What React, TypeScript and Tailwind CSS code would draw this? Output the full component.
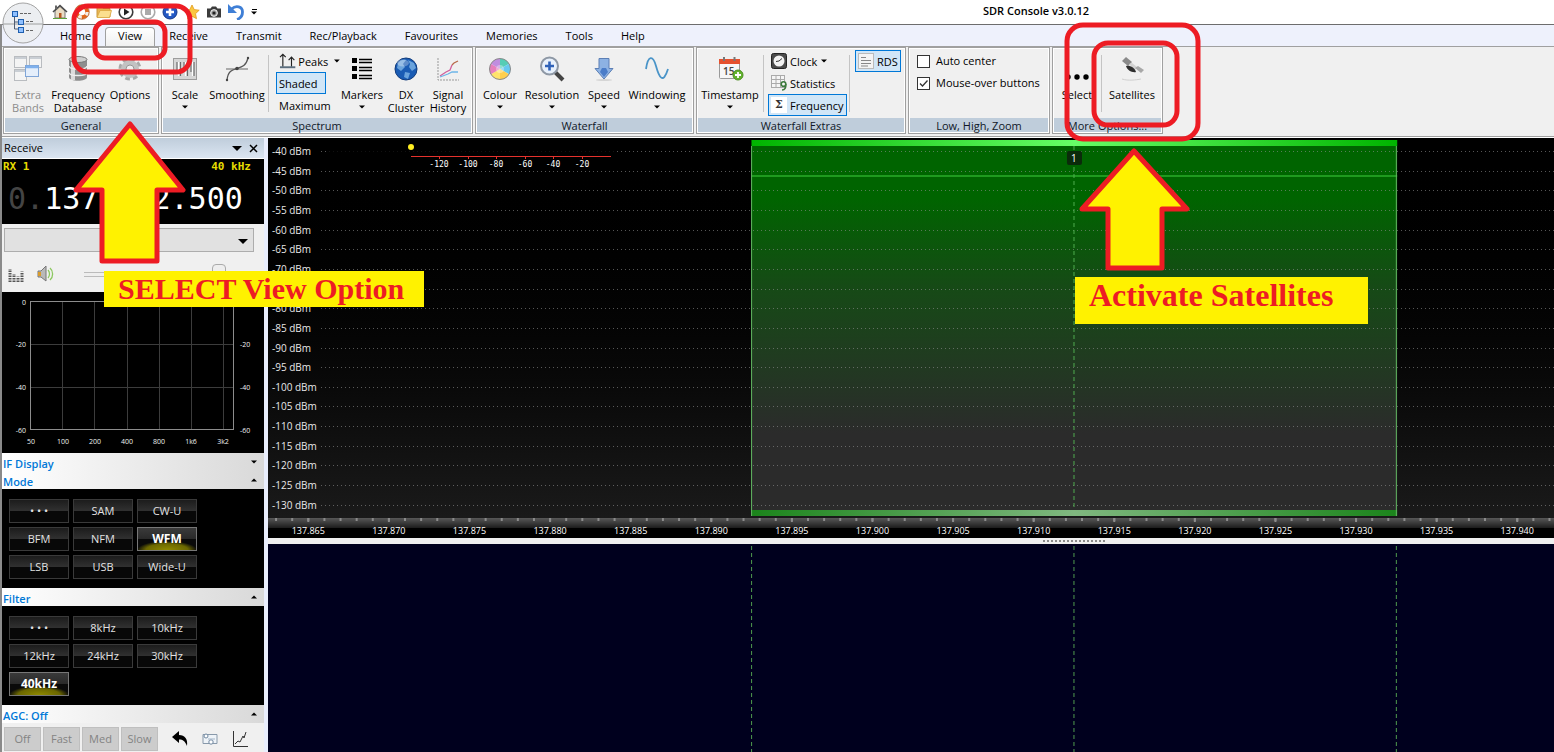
import type { ReactNode } from "react"

const SPAN_START = 137.8625
const SPAN = 0.07978

const freqToX = (freq: number) => `${((freq - SPAN_START) / SPAN) * 100}%`
const dbmToY = (dbm: number) => Math.round(13 + ((-40 - dbm) / 5) * 19.65)

const dbmLevels = Array.from({ length: 19 }, (_, i) => -40 - i * 5)
const freqLabels = Array.from({ length: 16 }, (_, i) => 137.865 + i * 0.005)
const freqTicks = Array.from({ length: 80 }, (_, i) => 137.863 + i * 0.001)
const tabs = ["Home", "View", "Receive", "Transmit", "Rec/Playback", "Favourites", "Memories", "Tools", "Help"]
const modes = ["• • •", "SAM", "CW-U", "BFM", "NFM", "WFM", "LSB", "USB", "Wide-U"]
const filters = ["• • •", "8kHz", "10kHz", "12kHz", "24kHz", "30kHz", "40kHz"]

/* ---------- Small shared pieces ---------- */

function Caret({ up = false, className = "" }: { up?: boolean; className?: string }) {
  return (
    <svg className={className} width="6" height="4" viewBox="0 0 6 4" aria-hidden="true">
      <path d={up ? "M0 3.5L3 .5L6 3.5Z" : "M0 .5H6L3 3.5Z"} fill="#000" />
    </svg>
  )
}

function Icon({ size = 28, box = 28, children }: { size?: number; box?: number; children: ReactNode }) {
  return (
    <svg width={size} height={size} viewBox={`0 0 ${box} ${box}`} fill="none" aria-hidden="true">
      {children}
    </svg>
  )
}

function BigButton({
  icon,
  label,
  second,
  caret,
  disabled,
  className,
}: {
  icon: ReactNode
  label: string
  second?: string
  caret?: boolean
  disabled?: boolean
  className: string
}) {
  return (
    <button
      type="button"
      disabled={disabled}
      className={`flex shrink-0 flex-col items-center pt-1 text-[11px] leading-[13px] whitespace-nowrap ${disabled ? "text-[#8c8c8c]" : "text-black"} ${className}`}
    >
      <span className="mb-[3px] flex h-8 items-center justify-center">{icon}</span>
      <span>{label}</span>
      {second && <span>{second}</span>}
      {caret && <Caret className="mt-1" />}
    </button>
  )
}

function Group({ title, className, children }: { title: string; className: string; children: ReactNode }) {
  return (
    <section className={`flex h-[87px] shrink-0 flex-col border border-[#a0a0a0] bg-white p-px ${className}`}>
      <div className="flex flex-1 bg-[#f0f0f0]">{children}</div>
      <h2 className="h-[14px] bg-[#bfcddb] text-center text-[11px] leading-4 text-[#101828]">{title}</h2>
    </section>
  )
}

function Separator() {
  return <div className="mx-px mt-[6px] h-[57px] w-px shrink-0 bg-[#c4c4c4]" />
}

/* ---------- Title bar ---------- */

function QuickAccess() {
  const item = "flex size-4 items-center justify-center"
  return (
    <div className="flex items-center gap-[6px] pl-[52px]">
      <button type="button" aria-label="Home" className={item}>
        <Icon size={16} box={16}>
          <path d="M3 7V14H13V7L8 2.500Z" fill="#e9dcc4" stroke="#777" />
          <path d="M1 8L8 1.500L15 8" stroke="#4a4a4a" strokeWidth="1.600" />
          <path d="M4 1.500V5" stroke="#666" strokeWidth="2" />
          <path d="M7 14V9H9.500V14Z" fill="#b5561f" />
          <path d="M1 14.500H15" stroke="#5da13b" />
        </Icon>
      </button>
      <button type="button" aria-label="Help" className={item}>
        <Icon size={16} box={16}>
          <circle cx="8" cy="8" r="5.200" stroke="#e0671b" strokeWidth="4" />
          <circle cx="8" cy="8" r="5.200" stroke="#f4eee6" strokeWidth="3.400" strokeDasharray="3.500 4.670" />
          <circle cx="8" cy="8" r="7.300" stroke="#9c4a16" strokeWidth=".6" />
        </Icon>
      </button>
      <button type="button" aria-label="Open" className={item}>
        <Icon size={16} box={16}>
          <path d="M1 13V3H6L7 4.500H14V13Z" fill="#e8b755" stroke="#c9973a" />
          <path d="M1 13.500L4 6.500H15.500L13.500 13.500Z" fill="#fbdf8e" stroke="#d9a640" strokeWidth=".8" />
        </Icon>
      </button>
      <button type="button" aria-label="Start" className={item}>
        <Icon size={16} box={16}>
          <circle cx="8" cy="8" r="6.800" fill="#fff" stroke="#3c3c3c" strokeWidth="1.600" />
          <path d="M6 4.500L11.500 8L6 11.500Z" fill="#222" />
        </Icon>
      </button>
      <button type="button" aria-label="Stop" className={item}>
        <Icon size={16} box={16}>
          <circle cx="8" cy="8" r="6.800" fill="#fff" stroke="#aaa" strokeWidth="1.600" />
          <rect x="5" y="5" width="6" height="6" fill="#aaa" />
        </Icon>
      </button>
      <button type="button" aria-label="Add" className={item}>
        <Icon size={16} box={16}>
          <circle cx="8" cy="8" r="7" fill="#2459c4" stroke="#16398a" />
          <path d="M8 4V12M4 8H12" stroke="#fff" strokeWidth="2.600" />
        </Icon>
      </button>
      <button type="button" aria-label="Favourite" className={item}>
        <Icon size={16} box={16}>
          <path d="M8 1L10.200 5.600L15.200 6.200L11.500 9.700L12.500 14.700L8 12.200L3.500 14.700L4.500 9.700L.8 6.200L5.800 5.600Z" fill="#fbc740" stroke="#e09b1c" strokeWidth=".8" />
        </Icon>
      </button>
      <button type="button" aria-label="Snapshot" className={item}>
        <Icon size={16} box={16}>
          <path d="M1 4.500H4.500L6 2.500H10L11.500 4.500H15V13.500H1Z" fill="#3b3b3b" />
          <circle cx="8" cy="9" r="3.400" fill="#999" stroke="#fff" strokeWidth=".9" />
          <circle cx="8" cy="9" r="1.600" fill="#222" />
        </Icon>
      </button>
      <button type="button" aria-label="Undo" className={item}>
        <Icon size={16} box={16}>
          <path d="M3.500 5C8 1 14.500 2.500 14.500 8C14.500 12 12 14.500 9 15.500" stroke="#3f7fd6" strokeWidth="2.800" />
          <path d="M0 0V9H9Z" fill="#3f7fd6" />
        </Icon>
      </button>
      <button type="button" aria-label="Customise toolbar" className="flex h-4 w-2 flex-col items-center justify-center gap-px">
        <span className="h-px w-[5px] bg-black" />
        <Caret />
      </button>
    </div>
  )
}

function TitleBar() {
  return (
    <header className="flex h-6 bg-white">
      <QuickAccess />
      <h1 className="flex-1 pl-[260px] text-center text-[11px] leading-[22px] font-semibold text-black">SDR Console v3.0.12</h1>
    </header>
  )
}

function AppOrb() {
  return (
    <button type="button" aria-label="Application menu" className="absolute top-[2px] left-[2px] size-[42px] rounded-full">
      <Icon size={42} box={42}>
        <circle cx="21" cy="21" r="20" fill="#eceef1" stroke="#a3a3a3" />
        <path d="M1.500 22H40.500" stroke="#8c8c8c" strokeWidth=".8" />
        <path d="M12.500 14V27H17M12.500 20H17" stroke="#4f5d73" />
        <path d="M18 11.500H29M24 19.500H32M24 28.500H32" stroke="#666" strokeDasharray="3 1" />
        <rect x="10.500" y="9.500" width="5" height="5" fill="#8fc0ff" stroke="#1f5fae" />
        <rect x="16.500" y="17.500" width="5" height="5" fill="#8fc0ff" stroke="#1f5fae" />
        <rect x="16.500" y="25.500" width="5" height="5" fill="#8fc0ff" stroke="#1f5fae" />
      </Icon>
    </button>
  )
}

function TabBar() {
  return (
    <nav className="flex h-[22px] items-end border-t border-[#6d6d6d] bg-[#eef1fc] pl-[44px]">
      {tabs.map((tab) => (
        <button
          key={tab}
          type="button"
          className={`h-[19px] pb-[2px] text-[11px] leading-4 text-black ${tab === "View" ? "rounded-t border border-b-0 border-[#a0a0a0] bg-gradient-to-b from-white to-[#f0f0f0] px-3" : "px-[14px]"}`}
        >
          {tab}
        </button>
      ))}
    </nav>
  )
}

/* ---------- Ribbon ---------- */

const icons = {
  bands: (
    <Icon size={30} box={30}>
      <g fill="#f4f4f4" stroke="#b9bcc0">
        <rect x="1.500" y="2.500" width="12" height="11" />
        <rect x="16.500" y="2.500" width="12" height="11" />
        <rect x="1.500" y="15.500" width="12" height="11" />
      </g>
      <path d="M2 4H13M17 4H28M2 17H13" stroke="#c9ced4" strokeWidth="2" />
      <rect x="12.500" y="11.500" width="13" height="11" fill="#e4eefb" stroke="#7fa5d8" />
      <path d="M13 13H25" stroke="#7fb0ec" strokeWidth="2.500" />
    </Icon>
  ),
  database: (
    <Icon>
      <path d="M5 4V22C5 27 23 27 23 22V4Z" fill="#8e8e8e" />
      <path d="M9 5V25" stroke="#dcdcdc" strokeWidth="4" />
      <ellipse cx="14" cy="4.500" rx="9" ry="3" fill="#cfcfcf" stroke="#777" />
      <path d="M5 11C5 15 23 15 23 11M5 17.500C5 21.500 23 21.500 23 17.500" stroke="#eee" strokeWidth="1.400" />
    </Icon>
  ),
  gear: (
    <Icon>
      <circle cx="14" cy="14" r="9.500" stroke="#a8a8a8" strokeWidth="4" strokeDasharray="4.500 2.960" />
      <circle cx="14" cy="14" r="6.500" stroke="#c2c2c2" strokeWidth="5" />
      <circle cx="14" cy="14" r="4" fill="#f0f0f0" stroke="#969696" />
    </Icon>
  ),
  scale: (
    <Icon>
      <rect x="2.500" y="3.500" width="23" height="21" fill="#d6d6d6" stroke="#9c9c9c" />
      <path d="M6 7V17M9.500 7V21M13 7V17M16.500 7V21M20 7V17M23 7V21" stroke="#6a6a6a" strokeWidth="1.200" />
      <path d="M7.500 7V21M14.500 7V21M21.500 7V21" stroke="#fff" strokeWidth="1.200" />
    </Icon>
  ),
  smoothing: (
    <Icon>
      <path d="M4 25C5 16 9 15 14 13.500S23 11 25 3" stroke="#555" strokeWidth="1.200" />
      <path d="M3 14H25" stroke="#666" />
      <circle cx="14" cy="13.500" r="1.800" fill="#444" />
      <circle cx="4" cy="25" r="1.200" fill="#444" />
      <circle cx="25" cy="3" r="1.200" fill="#444" />
    </Icon>
  ),
  markers: (
    <Icon>
      <path d="M4 3h5v5H4zM4 11h5v5H4zM4 19h5v5H4z" fill="#000" />
      <path d="M11 4.500H24M11 7.500H24M11 12.500H24M11 15.500H24M11 20.500H24M11 23.500H24" stroke="#000" strokeWidth="1.500" />
    </Icon>
  ),
  globe: (
    <Icon>
      <circle cx="14" cy="14" r="11" fill="#1a5cb4" stroke="#123c7c" />
      <path d="M6 8C8 5 12 4 14 5L11 9L13 12L9 16L5 13Z M16 5L22 8L24 13L20 16L17 12L18 9Z M13 17L18 18L16 24L12 22Z" fill="#6aa3dc" />
      <ellipse cx="11" cy="8" rx="6" ry="3.500" fill="#fff" opacity=".3" />
    </Icon>
  ),
  history: (
    <Icon>
      <path d="M4 3V25H25" stroke="#999" strokeDasharray="2 1" />
      <path d="M6 21L12 17L16 15L18 10" stroke="#d0609c" strokeWidth="1.300" />
      <path d="M18 10L20 8L24 6" stroke="#b86a4a" strokeWidth="1.300" />
      <path d="M6 22L14 19L18 17H24" stroke="#6db5e8" strokeWidth="1.300" />
    </Icon>
  ),
  colour: (
    <Icon>
      <path d="M14 14L14 3.500A10.500 10.500 0 0 1 23.100 8.800Z" fill="#55cdb5" />
      <path d="M14 14L23.100 8.800A10.500 10.500 0 0 1 23.100 19.200Z" fill="#67c8ef" />
      <path d="M14 14L23.100 19.200A10.500 10.500 0 0 1 14 24.500Z" fill="#ffcf4d" />
      <path d="M14 14L14 24.500A10.500 10.500 0 0 1 4.900 19.200Z" fill="#ffe36b" />
      <path d="M14 14L4.900 19.200A10.500 10.500 0 0 1 4.900 8.800Z" fill="#e77fbd" />
      <path d="M14 14L4.900 8.800A10.500 10.500 0 0 1 14 3.500Z" fill="#c08de0" />
      <circle cx="14" cy="14" r="10.500" stroke="#8a8a8a" />
      <circle cx="14" cy="14" r="4" fill="#fff" opacity=".35" />
    </Icon>
  ),
  resolution: (
    <Icon>
      <path d="M17 17L25 25" stroke="#444" strokeWidth="4" />
      <circle cx="11.500" cy="11" r="8.500" fill="#e8f1fc" stroke="#8e98a5" strokeWidth="2" />
      <path d="M11.500 6.500V15.500M7 11H16" stroke="#2f62b8" strokeWidth="2.600" />
    </Icon>
  ),
  speed: (
    <Icon>
      <ellipse cx="14" cy="25" rx="8" ry="1" fill="#d5d5d5" />
      <path d="M9 3.500H19V13.500H23L14 24L5 13.500H9Z" fill="#8db2e3" stroke="#5c7fb5" />
      <path d="M10 17L14 22L18 17L16 13H12Z" fill="#4a7cc8" />
    </Icon>
  ),
  windowing: (
    <Icon>
      <path d="M3 14C5 0 10 0 13 11S20 30 25 14" stroke="#4a94c8" strokeWidth="1.800" />
    </Icon>
  ),
  timestamp: (
    <Icon>
      <rect x="3.500" y="4.500" width="20" height="19" rx="1" fill="#f7f7f7" stroke="#9a9a9a" />
      <path d="M3 4H24V9H3Z" fill="#e5512e" />
      <path d="M8 2V6M18.500 2V6" stroke="#777" strokeWidth="2" />
      <text x="7" y="20" fontSize="10" fill="#444" fontWeight="600">15</text>
      <circle cx="22" cy="20" r="5" fill="#62b32e" stroke="#4d8f22" />
      <path d="M22 17V23M19 20H25" stroke="#fff" strokeWidth="1.800" />
    </Icon>
  ),
  select: (
    <Icon>
      <circle cx="5" cy="22" r="2.700" fill="#000" />
      <circle cx="14" cy="22" r="2.700" fill="#000" />
      <circle cx="23" cy="22" r="2.700" fill="#000" />
    </Icon>
  ),
  satellite: (
    <Icon>
      <path d="M4 6L8 2L14 7L10 11Z" fill="#8a8a8a" />
      <path d="M11 9L14 8L19 12L17 15Z" fill="#d2d2d2" />
      <path d="M17 13L20 11L26 15L23 18Z" fill="#a8a8a8" />
      <path d="M8 11C12 10 17 13 18 17C14 18 9 15 8 11Z" fill="#2e2e2e" />
      <path d="M4 24C10 26 18 25 23 24" stroke="#d0d0d0" />
    </Icon>
  ),
}

function Ribbon() {
  const row = "flex h-[22px] items-center text-[11px] leading-[13px] whitespace-nowrap text-black"
  const active = "border border-[#0078d7] bg-[#d1e6f7]"
  return (
    <div className="flex gap-[2px] border-t border-b border-t-[#a0a0a0] border-b-[#a0a0a0] bg-[#f0f0f0] pb-[2px] pl-px">
      <Group title="General" className="w-[156px]">
        <BigButton className="w-[46px]" icon={icons.bands} label="Extra" second="Bands" disabled />
        <BigButton className="w-[54px]" icon={icons.database} label="Frequency" second="Database" />
        <BigButton className="w-[50px]" icon={icons.gear} label="Options" />
      </Group>

      <Group title="Spectrum" className="w-[312px]">
        <BigButton className="w-[44px]" icon={icons.scale} label="Scale" caret />
        <BigButton className="w-[60px]" icon={icons.smoothing} label="Smoothing" />
        <Separator />
        <div className="ml-[6px] flex w-[64px] flex-col pt-px">
          <button type="button" className={`${row} gap-[2px] pl-[3px]`}>
            <Icon size={18} box={18}>
              <path d="M4 15V2M1 5L4 2L7 5M13 15V5M10 8L13 5L16 8" stroke="#222" strokeWidth="1.200" />
              <path d="M1 15.500H17" stroke="#5c6f7f" strokeWidth="2" />
            </Icon>
            Peaks
            <Caret className="ml-1" />
          </button>
          <button type="button" className={`${row} w-[50px] ${active} pl-[2px]`}>Shaded</button>
          <button type="button" className={`${row} pl-[3px]`}>Maximum</button>
        </div>
        <BigButton className="w-[44px]" icon={icons.markers} label="Markers" caret />
        <BigButton className="w-[44px]" icon={icons.globe} label="DX" second="Cluster" />
        <BigButton className="w-[40px]" icon={icons.history} label="Signal" second="History" />
      </Group>

      <Group title="Waterfall" className="w-[219px]">
        <BigButton className="w-[46px]" icon={icons.colour} label="Colour" caret />
        <BigButton className="w-[58px]" icon={icons.resolution} label="Resolution" caret />
        <BigButton className="w-[46px]" icon={icons.speed} label="Speed" caret />
        <BigButton className="w-[60px]" icon={icons.windowing} label="Windowing" caret />
      </Group>

      <Group title="Waterfall Extras" className="w-[210px]">
        <BigButton className="w-[64px]" icon={icons.timestamp} label="Timestamp" caret />
        <Separator />
        <div className="mx-px flex w-[81px] flex-col items-start pt-px pl-[2px]">
          <button type="button" className={`${row} gap-[3px] pl-[3px]`}>
            <Icon size={16} box={16}>
              <rect x=".5" y=".5" width="15" height="15" rx="2" fill="#4a4a4a" stroke="#222" />
              <circle cx="8" cy="8" r="5.500" fill="#f2f2f2" />
              <path d="M8 8L11 5.500M8 8L5 8.500" stroke="#333" />
            </Icon>
            Clock
            <Caret className="ml-px" />
          </button>
          <button type="button" className={`${row} gap-[3px] pl-[3px]`}>
            <Icon size={16} box={16}>
              <rect x=".5" y=".5" width="13" height="12" fill="#f5f5f5" stroke="#aaa" />
              <path d="M5 1V12M9.500 1V12M1 4.500H13M1 8.500H13" stroke="#aaa" />
              <circle cx="12.500" cy="9" r="2.300" fill="#f5f5f5" stroke="#3c7a3c" strokeWidth="1.600" />
              <path d="M14.800 9C15 12.500 14 15 11 15" stroke="#3c7a3c" strokeWidth="1.600" />
            </Icon>
            Statistics
          </button>
          <button type="button" className={`${row} ${active} gap-[3px] px-[2px]`}>
            <span className="size-4 bg-white text-center font-['DejaVu_Serif'] text-[11px] leading-4 font-bold text-[#333]">Σ</span>
            Frequency
          </button>
        </div>
        <Separator />
        <div className="ml-1 pt-px">
          <button type="button" className={`${row} ${active} gap-[3px] px-[2px]`}>
            <Icon size={16} box={16}>
              <rect x=".5" y=".5" width="15" height="15" fill="#f4f4f4" stroke="#bbb" />
              <path d="M3 4.500H8M3 7.500H13M3 10.500H13M3 13H10" stroke="#888" />
            </Icon>
            RDS
          </button>
        </div>
      </Group>

      <Group title="Low, High, Zoom" className="w-[142px]">
        <div className="flex flex-col pt-px pl-[7px]">
          <ToggleBox label="Auto center" />
          <ToggleBox label="Mouse-over buttons" checked />
        </div>
      </Group>

      <Group title="More Options..." className="w-[111px]">
        <BigButton className="w-[46px]" icon={icons.select} label="Select" />
        <Separator />
        <BigButton className="w-[58px]" icon={icons.satellite} label="Satellites" />
      </Group>
    </div>
  )
}

function ToggleBox({ label, checked = false }: { label: string; checked?: boolean }) {
  return (
    <label className="relative flex h-[22px] items-center gap-[6px] text-[11px] whitespace-nowrap text-black">
      <input type="checkbox" defaultChecked={checked} className="peer size-[13px] appearance-none border border-[#333] bg-white" />
      <svg className="pointer-events-none absolute left-0 hidden peer-checked:block" width="13" height="13" viewBox="0 0 13 13" aria-hidden="true">
        <path d="M3 6.500L5.500 9L10.500 3.500" fill="none" stroke="#333" strokeWidth="1.300" />
      </svg>
      {label}
    </label>
  )
}

/* ---------- Receive panel ---------- */

function SectionHeader({ title, open = true }: { title: string; open?: boolean }) {
  return (
    <button
      type="button"
      aria-expanded={open}
      className="flex h-[18px] w-full items-center justify-between bg-gradient-to-r from-white to-[#d9d9d9] pt-[3px] pr-[7px] pl-px text-[11px] leading-[15px] font-semibold text-[#0078d7]"
    >
      {title}
      <Caret up={open} className="mb-1" />
    </button>
  )
}

function ButtonGrid({ items, selected }: { items: string[]; selected: string }) {
  return (
    <div className="grid grid-cols-[60px_60px_60px] content-start gap-1 bg-black px-[7px] pt-[10px] pb-[9px]">
      {items.map((item) => (
        <button
          key={item}
          type="button"
          className={
            item === selected
              ? "h-6 border border-[#777] bg-[radial-gradient(ellipse_30px_9px_at_50%_100%,#8f8a00_0%,#6b6700_70%,transparent_100%),linear-gradient(#3a3a3a_0%,#2a2a2a_48%,#0a0a0a_50%,#0a0a0a_100%)] text-[12px] leading-[22px] font-bold text-white"
              : "h-6 border border-[#3a3a3a] bg-[linear-gradient(#1c1c1c_0%,#303030_48%,#080808_50%,#080808_100%)] text-[11px] leading-5 text-[#e2e2e2]"
          }
        >
          {item}
        </button>
      ))}
    </div>
  )
}

function AudioGraph() {
  const cols = [60, 92, 125, 157, 189, 221]
  return (
    <svg className="block h-[161px] w-full bg-black" fontSize="7" fill="#f0f0f0" role="img" aria-label="Audio spectrum">
      <g stroke="#3c3c3c" shapeRendering="crispEdges">
        {cols.map((x) => (
          <path key={x} d={`M${x}.5 9V138`} />
        ))}
        <path d="M28 52.500H232M28 95.500H232" />
      </g>
      <rect x="28.500" y="9.500" width="203" height="128" fill="none" stroke="#8c8c8c" />
      <g textAnchor="end">
        <text x="24" y="13">0</text>
        <text x="24" y="55">-20</text>
        <text x="24" y="98">-40</text>
        <text x="24" y="141">-60</text>
      </g>
      <text x="238" y="55">-20</text>
      <text x="238" y="98">-40</text>
      <text x="238" y="141">-60</text>
      <g textAnchor="middle">
        {["50", "100", "200", "400", "800", "1k6", "3k2"].map((label, i) => (
          <text key={label} x={29 + i * 32} y="152">{label}</text>
        ))}
      </g>
    </svg>
  )
}

function ReceivePanel() {
  return (
    <aside className="w-[262px] shrink-0 bg-[#f0f0f0]">
      <div className="flex h-[21px] items-center border-b border-white bg-gradient-to-b from-[#bfcddb] to-[#dbe5f1] pr-[6px] pl-[2px] text-[11px] text-black">
        <span className="flex-1">Receive</span>
        <button type="button" aria-label="Panel menu" className="mr-[7px]">
          <svg width="10" height="5" viewBox="0 0 10 5" aria-hidden="true"><path d="M0 0H10L5 5Z" /></svg>
        </button>
        <button type="button" aria-label="Close panel">
          <svg width="9" height="9" viewBox="0 0 9 9" aria-hidden="true"><path d="M1 1L8 8M8 1L1 8" stroke="#000" strokeWidth="1.500" /></svg>
        </button>
      </div>

      <div className="h-[65px] bg-black font-['DejaVu_Sans_Mono',monospace]">
        <div className="flex justify-between pr-[13px] pl-px text-[11px] leading-[15px] font-bold text-[#e6dc00]">
          <span>RX 1</span>
          <span>40 kHz</span>
        </div>
        <div className="pl-[6px] text-[30px] leading-[50px] text-white">
          <span className="text-[#444]">0.</span>137.912.500
        </div>
      </div>

      <div className="relative mt-1 ml-[2px] w-[250px]">
        <select aria-label="Receiver preset" className="h-6 w-full appearance-none border border-[#adadad] bg-[#e1e1e1]" />
        <svg className="pointer-events-none absolute top-[11px] right-[6px]" width="10" height="6" viewBox="0 0 10 6" aria-hidden="true">
          <path d="M0 0H10L5 5Z" />
        </svg>
      </div>

      <div className="flex h-[39px] items-center gap-[13px] pt-[2px] pl-[6px]">
        <button type="button" aria-label="Equaliser">
          <Icon size={16} box={16}>
            <path d="M2 16V3M6 16V8M10 16V10.500M14 16V5.500" stroke="#555" strokeWidth="3" strokeDasharray="1.500 1" />
          </Icon>
        </button>
        <button type="button" aria-label="Mute">
          <Icon size={18} box={18}>
            <path d="M1 6H4L9 1V16L4 12H1Z" fill="#b9b9b9" stroke="#777" />
            <path d="M1 7H4V11H1Z" fill="#d99b2c" />
            <path d="M11 5C13 7 13 11 11 13M13 3C16.500 6 16.500 12 13 15" stroke="#8cc860" strokeWidth="1.300" />
          </Icon>
        </button>
        <input
          type="range"
          aria-label="Volume"
          defaultValue={84}
          className="ml-4 h-5 w-[166px] appearance-none bg-[linear-gradient(transparent_8px,#bbb_8px,#bbb_9px,#eee_9px,#eee_12px,#bbb_12px,#bbb_13px,transparent_13px)] [&::-webkit-slider-thumb]:h-5 [&::-webkit-slider-thumb]:w-[14px] [&::-webkit-slider-thumb]:appearance-none [&::-webkit-slider-thumb]:rounded-sm [&::-webkit-slider-thumb]:border [&::-webkit-slider-thumb]:border-[#aaa] [&::-webkit-slider-thumb]:bg-[#eeeeee]"
        />
      </div>

      <AudioGraph />
      <SectionHeader title="IF Display" open={false} />
      <SectionHeader title="Mode" />
      <ButtonGrid items={modes} selected="WFM" />
      <SectionHeader title="Filter" />
      <ButtonGrid items={filters} selected="40kHz" />
      <SectionHeader title="AGC: Off" />

      <div className="flex items-start gap-[2px] pt-1 pb-px pl-[2px]">
        {["Off", "Fast", "Med", "Slow"].map((speed) => (
          <button key={speed} type="button" disabled className="h-6 w-[37px] border border-[#bfbfbf] bg-[#cccccc] text-[11px] leading-[22px] text-[#838383]">
            {speed}
          </button>
        ))}
        <div className="flex gap-[14px] pt-1 pl-3">
          <button type="button" aria-label="Back">
            <Icon size={16} box={16}>
              <path d="M0 6L7 0V4C13 4 16 8 15 15C13 10 11 8.500 7 8.500V12Z" fill="#000" />
            </Icon>
          </button>
          <button type="button" aria-label="Notch">
            <Icon size={16} box={16}>
              <path d="M1 3.500H15V12.500H1Z" fill="#eef3f8" stroke="#8899aa" />
              <circle cx="4" cy="5" r="2" fill="#fff" stroke="#6f87a0" />
              <circle cx="9" cy="11" r="2.200" fill="#fff" stroke="#6f87a0" />
              <path d="M6 8H13" stroke="#a3b5c8" />
            </Icon>
          </button>
          <button type="button" aria-label="Graph">
            <Icon size={16} box={16}>
              <path d="M1.500 0V15.500H16" stroke="#333" />
              <path d="M3 13L6 10L8 11L11 5L12 7L14 1" stroke="#333" />
            </Icon>
          </button>
        </div>
      </div>
    </aside>
  )
}

/* ---------- Spectrum and waterfall ---------- */

function Spectrum() {
  return (
    <svg className="block h-[380px] w-full bg-gradient-to-b from-black to-[#1a1a1a]" fill="#e8e8e8" role="img" aria-label="Spectrum">
      <defs>
        <linearGradient id="passband" x1="0" y1="0" x2="0" y2="1">
          <stop offset="0" stopColor="#006400" />
          <stop offset=".16" stopColor="#006400" />
          <stop offset=".39" stopColor="#164a16" />
          <stop offset=".78" stopColor="#2b2b2b" />
          <stop offset="1" stopColor="#2b2b2b" />
        </linearGradient>
        <linearGradient id="edgeTop">
          <stop offset="0" stopColor="#00b400" />
          <stop offset=".5" stopColor="#66ff66" />
          <stop offset="1" stopColor="#00b400" />
        </linearGradient>
        <linearGradient id="edgeBottom">
          <stop offset="0" stopColor="#1b841b" />
          <stop offset=".5" stopColor="#80b880" />
          <stop offset="1" stopColor="#1b841b" />
        </linearGradient>
      </defs>

      {/* Tuned passband */}
      <rect x={freqToX(137.8925)} y="2" width="50.200%" height="376" fill="url(#passband)" />
      <rect x={freqToX(137.8925)} y="2" width="50.200%" height="6" fill="url(#edgeTop)" />
      <rect x={freqToX(137.8925)} y="372" width="50.200%" height="6" fill="url(#edgeBottom)" />
      <rect x={freqToX(137.8925)} y="37" width="50.200%" height="2" fill="#1f9a1f" />

      {/* Level grid */}
      {dbmLevels.map((dbm) => (
        <g key={dbm}>
          <line x1="53" x2="100%" y1={dbmToY(dbm) + 0.5} y2={dbmToY(dbm) + 0.5} stroke="#909090" strokeOpacity=".6" strokeDasharray="1 3" />
          <text x="4" y={dbmToY(dbm) + 4} fontSize="10">{dbm} dBm</text>
        </g>
      ))}

      <line x1={freqToX(137.8925)} x2={freqToX(137.8925)} y1="8" y2="378" stroke="#62b862" />
      <line x1={freqToX(137.9325)} x2={freqToX(137.9325)} y1="8" y2="378" stroke="#62b862" />
      <line x1={freqToX(137.9125)} x2={freqToX(137.9125)} y1="8" y2="372" stroke="#4fae4f" strokeWidth="2" strokeOpacity=".5" strokeDasharray="4 3" />
      <svg x={freqToX(137.9125)} y="13" overflow="visible">
        <rect x="-7" width="15" height="14" rx="2" fill="#0b2b0b" />
        <text x="0" y="11" fontSize="10" textAnchor="middle" fill="#fff">1</text>
      </svg>

      {/* Signal meter */}
      <rect x="58" y="2" width="290" height="31" fill="#000" fillOpacity=".8" />
      <circle cx="143" cy="9" r="3" fill="#ffee22" />
      <path d="M143 18.500H343M171.500 18V21M200.500 18V21M228.500 18V21M257.500 18V21M285.500 18V21M314.500 18V21" stroke="#e5322d" />
      <g fontFamily="DejaVu Sans Mono, monospace" fontSize="8" textAnchor="middle" fill="#fff">
        {[-120, -100, -80, -60, -40, -20].map((level, i) => (
          <text key={level} x={171 + Math.round(i * 28.6)} y="29">{level}</text>
        ))}
      </g>
    </svg>
  )
}

function FrequencyScale() {
  return (
    <svg className="block h-5 w-full bg-black bg-[linear-gradient(#585858_0px,#1c1c1c_10px,#000_10px)]" fill="#ffffff" fontSize="9" textAnchor="middle" role="img" aria-label="Frequency scale">
      {freqTicks.map((freq) => (
        <line key={freq} x1={freqToX(freq)} x2={freqToX(freq)} y1="0" y2="3" stroke="#8c8c8c" strokeWidth="2" />
      ))}
      {freqLabels.map((freq) => (
        <g key={freq}>
          <line x1={freqToX(freq)} x2={freqToX(freq)} y1="0" y2="4" stroke="#8c8c8c" strokeWidth="2" />
          <text x={freqToX(freq)} y="16">{freq.toFixed(3)}</text>
        </g>
      ))}
    </svg>
  )
}

function Waterfall() {
  return (
    <svg className="block min-h-0 w-full flex-1 bg-[#00001e]" role="img" aria-label="Waterfall">
      {[137.8925, 137.9125, 137.9325].map((freq) => (
        <line key={freq} x1={freqToX(freq)} x2={freqToX(freq)} y1="2" y2="100%" stroke="#4f9a4f" strokeDasharray="4 3" />
      ))}
    </svg>
  )
}

function Splitter() {
  return (
    <div className="flex h-[6px] items-center justify-center bg-[#f0f0f0] pl-[326px]">
      <div className="h-[2px] w-[62px] bg-[repeating-linear-gradient(90deg,#8a8a8a_0px,#8a8a8a_2px,transparent_2px,transparent_4px)]" />
    </div>
  )
}

/* ---------- Tutorial notes drawn over the window ---------- */

function Annotations() {
  return (
    <div className="pointer-events-none absolute inset-0 overflow-hidden font-['Liberation_Serif',serif] font-bold whitespace-nowrap text-[#ed1c24]">
      <svg className="absolute inset-0 size-full" fill="none" stroke="#ed1c24" strokeWidth="5" strokeLinejoin="round" aria-hidden="true">
        <rect x="74" y="6" width="116" height="66" rx="14" />
        <rect x="95" y="22" width="70" height="36" rx="10" />
        <rect x="1067" y="25" width="131" height="114" rx="16" />
        <rect x="1094" y="43" width="83" height="82" rx="14" />
        <path d="M130 124L183 190H157V261H102V190H76Z" fill="#fff200" />
        <path d="M1134 151L1187 209H1162V268H1108V209H1082Z" fill="#fff200" />
      </svg>
      <p className="absolute top-[271px] left-[104px] h-9 w-80 bg-[#fff200] pl-[14px] text-[30px] leading-9">SELECT View Option</p>
      <p className="absolute top-[277px] left-[1075px] h-[47px] w-[293px] bg-[#fff200] pl-[14px] text-[32px] leading-9">Activate Satellites</p>
    </div>
  )
}

export default function App() {
  return (
    <div className="relative flex min-h-screen flex-col overflow-hidden bg-[#e9eefd] font-['Open_Sans','Noto_Sans',sans-serif]">
      <TitleBar />
      <div className="flex flex-1 flex-col border-l-2 border-[#8a8a8a]">
        <TabBar />
        <Ribbon />
        <main className="flex flex-1 gap-1 border-t border-white">
          <ReceivePanel />
          <div className="flex min-w-0 flex-1 flex-col">
            <Spectrum />
            <FrequencyScale />
            <Splitter />
            <Waterfall />
          </div>
        </main>
      </div>
      <AppOrb />
      <Annotations />
    </div>
  )
}
